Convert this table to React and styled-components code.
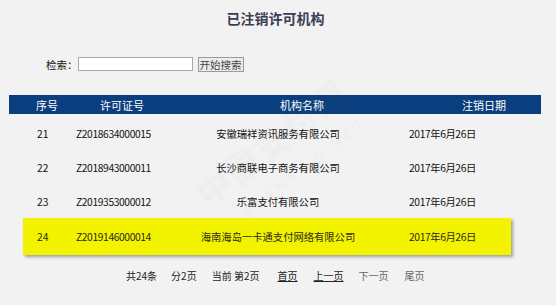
import React from "react";
import styled, { createGlobalStyle } from "styled-components";

const GlobalStyle = createGlobalStyle`
  html, body {
    margin: 0;
    padding: 0;
    background: #f2f2f2;
  }
  body {
    font-family: "Noto Sans CJK SC", "Liberation Sans", sans-serif;
  }
`;

const Page = styled.div`
  position: relative;
  width: 556px;
  height: 305px;
  padding-top: 8px;
  box-sizing: border-box;
  overflow: hidden;
  background: #f2f2f2;
  color: #111;
`;

const Title = styled.h1`
  margin: 0;
  height: 20px;
  line-height: 20px;
  padding-right: 5px;
  text-align: center;
  font-size: 14px;
  font-weight: bold;
  color: #3d3d55;
`;

const SearchRow = styled.div`
  display: flex;
  align-items: center;
  height: 16px;
  margin-top: 28px;
  padding-left: 46px;
  font-size: 10.5px;
  label {
    color: #111;
  }
`;

const SearchInput = styled.input`
  width: 115px;
  height: 14px;
  box-sizing: border-box;
  padding: 0 2px;
  border: 1px solid #a9a9a9;
  background: #fff;
  outline: none;
`;

const SearchButton = styled.button`
  margin-left: 5px;
  width: 46px;
  height: 15px;
  padding: 0;
  box-sizing: border-box;
  border: 1px solid #9a9a9a;
  background: #ececec;
  font-family: inherit;
  font-size: 10.5px;
  line-height: 13px;
  color: #444;
`;

const Table = styled.div`
  margin: 23px 0 0 9px;
  width: 532px;
`;

const HeadRow = styled.div`
  display: grid;
  grid-template-columns: 91px 162px 80px 1fr;
  align-items: center;
  height: 19px;
  background: #0b3e7e;
  color: #fff;
  font-size: 11px;
  span:nth-child(1) {
    padding-left: 27px;
  }
  span:nth-child(3) {
    text-align: center;
  }
  span:nth-child(4) {
    text-align: right;
    padding-right: 35px;
  }
`;

const Body = styled.div`
  padding-top: 2px;
`;

const Row = styled.div`
  display: grid;
  grid-template-columns: ${(p) => (p.$hot ? "53px" : "67px")} 100px 204px 1fr;
  align-items: center;
  height: ${(p) => (p.$hot ? "37px" : "34px")};
  margin: ${(p) => (p.$hot ? "0 30px 0 14px" : "0")};
  background: ${(p) => (p.$hot ? "#f3f300" : "transparent")};
  box-shadow: ${(p) => (p.$hot ? "2px 2px 3px rgba(0, 0, 0, 0.35)" : "none")};
  font-size: 10.3px;
  color: ${(p) => (p.$hot ? "#2a2a1a" : "#111")};
`;

const Cell = styled.span`
  white-space: nowrap;
  padding-left: ${(p) => p.$pad || 0}px;
  text-align: ${(p) => p.$align || "left"};
  letter-spacing: ${(p) => (p.$tight ? "-0.4px" : "0")};
`;

const Pager = styled.div`
  display: flex;
  align-items: center;
  height: 16px;
  margin-top: 12px;
  padding-left: 126px;
  font-size: 10px;
  color: #222;
`;

const PagerItem = styled.span`
  margin-right: ${(p) => p.$gap}px;
  white-space: pre;
  color: ${(p) => (p.$muted ? "#666" : "#222")};
  text-decoration: ${(p) => (p.$link ? "underline" : "none")};
`;

const Watermark = styled.div`
  position: absolute;
  left: ${(p) => p.$x}px;
  top: ${(p) => p.$y}px;
  transform: translate(-50%, -50%) rotate(-38deg);
  font-family: "Noto Sans CJK SC", "Liberation Sans", sans-serif;
  font-weight: 900;
  font-size: ${(p) => p.$size}px;
  letter-spacing: ${(p) => p.$spacing}px;
  color: rgba(120, 120, 120, 0.055);
  white-space: nowrap;
  pointer-events: none;
`;

const rows = [
  { no: "21", code: "Z2018634000015", name: "安徽瑞祥资讯服务有限公司", date: "2017年6月26日" },
  { no: "22", code: "Z2018943000011", name: "长沙商联电子商务有限公司", date: "2017年6月26日" },
  { no: "23", code: "Z2019353000012", name: "乐富支付有限公司", date: "2017年6月26日" },
  { no: "24", code: "Z2019146000014", name: "海南海岛一卡通支付网络有限公司", date: "2017年6月26日", hot: true },
];

export default function App() {
  return (
    <Page>
      <GlobalStyle />
      <Title>已注销许可机构</Title>
      <SearchRow>
        <label>检索：</label>
        <SearchInput type="text" />
        <SearchButton>开始搜索</SearchButton>
      </SearchRow>
      <Table>
        <HeadRow>
          <span>序号</span>
          <span>许可证号</span>
          <span>机构名称</span>
          <span>注销日期</span>
        </HeadRow>
        <Body>
          {rows.map((r) => (
            <Row key={r.no} $hot={r.hot}>
              <Cell $pad={r.hot ? 14 : 28}>{r.no}</Cell>
              <Cell $tight>{r.code}</Cell>
              <Cell $align="center">{r.name}</Cell>
              <Cell $pad={29} $tight>
                {r.date}
              </Cell>
            </Row>
          ))}
        </Body>
      </Table>
      <Pager>
        <PagerItem $gap={14}>共24条</PagerItem>
        <PagerItem $gap={15}>分2页</PagerItem>
        <PagerItem $gap={18}>当前 第2页</PagerItem>
        <PagerItem $gap={16} $link>首页</PagerItem>
        <PagerItem $gap={15} $link>上一页</PagerItem>
        <PagerItem $gap={16} $muted>下一页</PagerItem>
        <PagerItem $muted>尾页</PagerItem>
      </Pager>
      <Watermark $x={271} $y={142} $size={34} $spacing={2}>
        中国支付网
      </Watermark>
      <Watermark $x={305} $y={166} $size={15} $spacing={4}>
        PAYNEWS.NET
      </Watermark>
    </Page>
  );
}
